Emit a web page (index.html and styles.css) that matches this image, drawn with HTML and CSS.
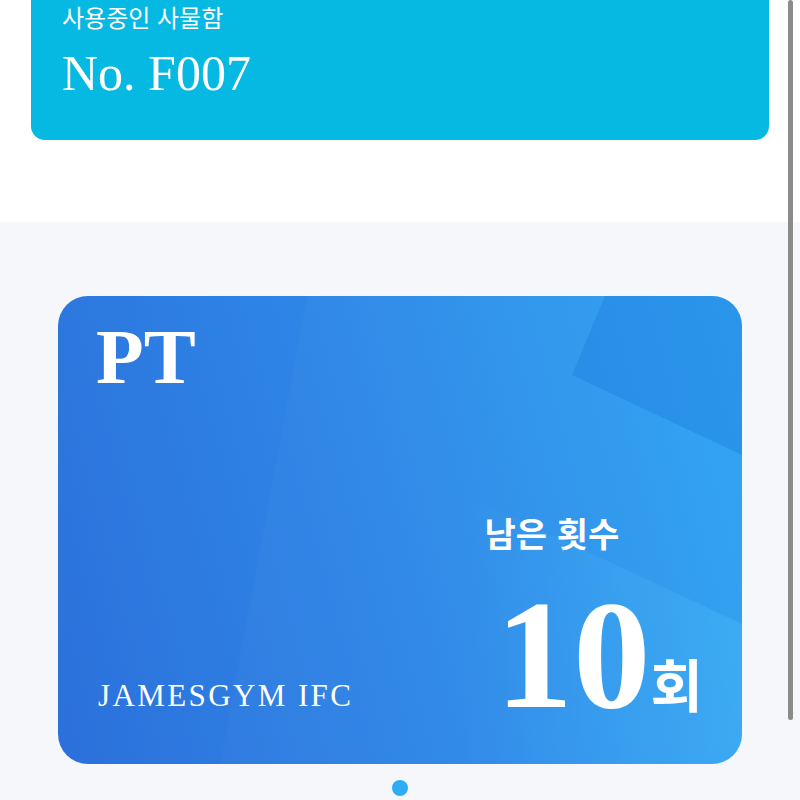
FILE: index.html
```html
<!DOCTYPE html>
<html lang="ko">
<head>
<meta charset="utf-8">
<title>PT</title>
<link rel="stylesheet" href="styles.css">
</head>
<body>
<div class="top">
  <div class="locker">
    <div class="locker-label">사용중인 사물함</div>
    <div class="locker-no">No. F007</div>
  </div>
</div>
<div class="main">
  <div class="card">
    <svg class="card-bg" viewBox="0 0 684 468" preserveAspectRatio="none" aria-hidden="true">
      <defs>
        <linearGradient id="lf" x1="0" y1="0" x2="1" y2="0">
          <stop offset="0" stop-color="#5fd0ff" stop-opacity="0"/>
          <stop offset="1" stop-color="#5fd0ff" stop-opacity="0.22"/>
        </linearGradient>
      </defs>
      <polygon points="249,0 684,0 684,468 162,468" fill="#ffffff" fill-opacity="0.02"/>
      <polygon points="547,0 514,79 684,159 684,0" fill="#1670dc" fill-opacity="0.3"/>
      <polygon points="400,195 684,328 684,468 400,468" fill="url(#lf)"/>
    </svg>
    <div class="card-title">PT</div>
    <div class="card-spacer"></div>
    <div class="card-bottom">
      <div class="gym">JAMESGYM IFC</div>
      <div class="remain">
        <div class="remain-label">남은 횟수</div>
        <div class="remain-row">
          <span class="remain-num">10</span><span class="remain-unit">회</span>
        </div>
      </div>
    </div>
  </div>
  <div class="dots"><span class="dot"></span></div>
</div>
<div class="scrollbar"></div>
</body>
</html>
```
FILE: styles.css
```css
html, body {
  margin: 0;
  padding: 0;
  height: 800px;
  overflow: hidden;
}
body {
  position: relative;
  background: #f5f7fa;
  font-family: "Noto Sans CJK KR", "Noto Sans", sans-serif;
  color: #ffffff;
}
.top {
  background: #ffffff;
  height: 222px;
  padding: 0 31px;
  box-sizing: border-box;
}
.locker {
  height: 140px;
  background: #06b9e2;
  border-radius: 0 0 14px 14px;
  padding: 5px 0 0 31px;
  box-sizing: border-box;
}
.locker-label {
  font-family: "Noto Sans CJK KR", sans-serif;
  font-size: 24px;
  line-height: 24px;
  font-weight: 400;
}
.locker-no {
  margin-top: 19px;
  font-family: "Liberation Serif", "Times New Roman", serif;
  font-size: 50px;
  line-height: 50px;
}
.main {
  background: #f5f7fa;
  padding-top: 74px;
}
.card {
  position: relative;
  margin: 0 58px;
  height: 468px;
  border-radius: 30px;
  overflow: hidden;
  background: linear-gradient(75deg, #2c70db 0%, #2e88e8 50%, #2fa6f2 100%);
  display: flex;
  flex-direction: column;
  padding: 22px 39px 44px 38px;
  box-sizing: border-box;
}
.card-bg {
  position: absolute;
  left: 0;
  top: 0;
  width: 100%;
  height: 100%;
}
.card-title, .card-bottom {
  position: relative;
}
.card-title {
  font-family: "Liberation Serif", "Times New Roman", serif;
  font-weight: 700;
  font-size: 78px;
  line-height: 78px;
}
.card-spacer {
  flex: 1;
}
.card-bottom {
  display: flex;
  justify-content: space-between;
  align-items: flex-end;
}
.gym {
  font-family: "Liberation Serif", "Times New Roman", serif;
  font-size: 31px;
  line-height: 31px;
  letter-spacing: 2.4px;
  margin: 0 0 9px 2px;
}
.remain {
  display: flex;
  flex-direction: column;
  align-items: flex-start;
}
.remain-label {
  font-family: "Noto Sans CJK KR", sans-serif;
  font-weight: 700;
  font-size: 34px;
  line-height: 34px;
  margin-left: -11px;
}
.remain-row {
  margin-top: 40px;
  display: flex;
  align-items: baseline;
}
.remain-num {
  font-family: "Liberation Serif", "Times New Roman", serif;
  font-weight: 700;
  font-size: 155px;
  line-height: 130px;
}
.remain-unit {
  font-family: "Noto Sans CJK KR", sans-serif;
  font-weight: 700;
  font-size: 57px;
  line-height: 57px;
}
.dots {
  display: flex;
  justify-content: center;
  padding-top: 16px;
}
.dot {
  width: 16px;
  height: 16px;
  border-radius: 50%;
  background: #2eadf5;
}
.scrollbar {
  position: absolute;
  top: 0;
  right: 7px;
  width: 5px;
  height: 720px;
  border-radius: 3px;
  background: #8b8b8b;
}
```
